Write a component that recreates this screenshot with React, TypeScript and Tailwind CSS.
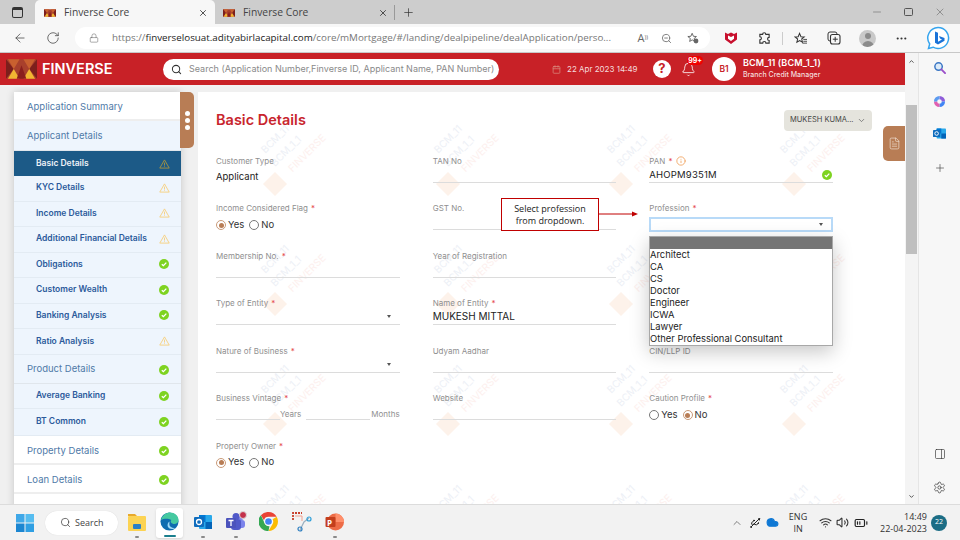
import React from "react";
import { ArrowLeft, RotateCw, Lock, X, Plus, Minus, Search, ZoomOut, ChevronDown, ChevronUp, Calendar, Bell, MoreHorizontal, Settings, PanelRight, FileText, Wifi, Volume2, BatteryMedium, Usb, Cloud, Info } from "lucide-react";

function Logo({ className }: { className: string }) {
  return (
    <svg viewBox="0 0 32 20" className={className}>
      <rect width="32" height="20" fill="#a8402c" />
      <polygon points="0,0 8,10 0,20" fill="#7c1f1c" />
      <polygon points="32,0 24,10 32,20" fill="#7c1f1c" />
      <polygon points="2,0 14,0 8,10" fill="#c9602f" />
      <polygon points="18,0 30,0 24,10" fill="#c9602f" />
      <polygon points="8,10 2,20 14,20" fill="#f2b632" />
      <polygon points="24,10 18,20 30,20" fill="#f2b632" />
      <polygon points="16,6 11,20 21,20" fill="#8a1f1d" />
    </svg>
  );
}

function Ok({ className = "" }: { className?: string }) {
  return (
    <svg viewBox="0 0 10 10" className={`w-[10px] h-[10px] shrink-0 ${className}`}>
      <circle cx="5" cy="5" r="5" fill="#7ed321" />
      <path d="M2.8 5.2 4.4 6.7 7.3 3.6" fill="none" stroke="#fff" strokeWidth="1.3" />
    </svg>
  );
}

function Warn({ dark = false }: { dark?: boolean }) {
  const c = dark ? "#a8943f" : "#f6cf7d";
  return (
    <svg viewBox="0 0 12 11" className="w-[11px] h-[10px] shrink-0">
      <path d="M6 1 11.2 10H.8Z" fill="none" stroke={c} strokeWidth="1" strokeLinejoin="round" />
      <path d="M6 4v3.2M6 8.1v.7" stroke={c} strokeWidth="1" />
    </svg>
  );
}

type NavItem = { t: string; s?: "ok" | "warn"; kind: "top" | "topw" | "sub"; active?: boolean; h: string };
const nav: NavItem[] = [
  { t: "Application Summary", kind: "topw", h: "h-[29px]" },
  { t: "Applicant Details", kind: "top", h: "h-[30px]" },
  { t: "Basic Details", kind: "sub", s: "warn", active: true, h: "h-[25px]" },
  { t: "KYC Details", kind: "sub", s: "warn", h: "h-[25.5px]" },
  { t: "Income Details", kind: "sub", s: "warn", h: "h-[25.5px]" },
  { t: "Additional Financial Details", kind: "sub", s: "warn", h: "h-[25.5px]" },
  { t: "Obligations", kind: "sub", s: "ok", h: "h-[25.5px]" },
  { t: "Customer Wealth", kind: "sub", s: "ok", h: "h-[25.5px]" },
  { t: "Banking Analysis", kind: "sub", s: "ok", h: "h-[25.5px]" },
  { t: "Ratio Analysis", kind: "sub", s: "warn", h: "h-[26px]" },
  { t: "Product Details", kind: "top", s: "ok", h: "h-[29px]" },
  { t: "Average Banking", kind: "sub", s: "ok", h: "h-[25px]" },
  { t: "BT Common", kind: "sub", s: "ok", h: "h-[27px]" },
  { t: "Property Details", kind: "topw", s: "ok", h: "h-[29px]" },
  { t: "Loan Details", kind: "topw", s: "ok", h: "h-[29px]" },
];

function NavRow({ n }: { n: NavItem }) {
  const base = n.active
    ? "bg-[#1c5a87] text-[#eef3f8] font-semibold text-[8.5px] pl-[22px]"
    : n.kind === "sub"
    ? "bg-[#eef5fd] text-[#2b5a9b] font-semibold text-[8.5px] pl-[22px] border-b border-[#e3ebf3] pb-[1px]"
    : n.kind === "top"
    ? "bg-[#eef5fd] text-[#4f7aa8] text-[9.5px] pl-[13px] border-b border-[#e0e6ec] pt-[1px]"
    : "bg-white text-[#4f7aa8] text-[9.5px] pl-[13px] border-b-2 border-[#eeeeee] pt-[3px]";
  return (
    <div className={`${n.h} flex items-center justify-between pr-[11px] ${base}`}>
      <span>{n.t}</span>
      {n.s === "ok" && <Ok className="mr-[1px]" />}
      {n.s === "warn" && <Warn dark={n.active} />}
    </div>
  );
}

function Label({ text, req }: { text: string; req?: boolean }) {
  return (
    <div className="h-3 flex items-center text-[8px] leading-3 text-[#8f8f8f]">
      {text}
      {req && <span className="text-[#e5484d] ml-[3px]">*</span>}
    </div>
  );
}

function Arrow() {
  return <span className="w-0 h-0 border-x-[2.500px] border-x-transparent border-t-[3px] border-t-[#555]" />;
}

function Field({ label, req, value, select, children }: { label: string; req?: boolean; value?: string; select?: boolean; children?: React.ReactNode }) {
  return (
    <div>
      <Label text={label} req={req} />
      {children ?? (
        <div className="h-[16px] border-b border-[#dcdcdc] flex items-center justify-between text-[10px] text-[#222] pr-[9px]">
          <span>{value}</span>
          {select && <Arrow />}
        </div>
      )}
    </div>
  );
}

function Radios({ yes }: { yes: boolean }) {
  const On = () => (
    <span className="w-[10px] h-[10px] rounded-full border border-[#c99a78] flex items-center justify-center">
      <span className="w-[5px] h-[5px] rounded-full bg-[#b87d55]" />
    </span>
  );
  const Off = () => <span className="w-[10px] h-[10px] rounded-full border border-[#777] bg-white" />;
  return (
    <div className="h-[16px] flex items-center text-[9.500px] text-[#333] mt-[3px]">
      {yes ? <On /> : <Off />}
      <span className="ml-[2px] mr-[5px]">Yes</span>
      {yes ? <Off /> : <On />}
      <span className="ml-[2px]">No</span>
    </div>
  );
}

function Tile() {
  return (
    <div className="relative w-[173px] h-[120px]">
      <span className="absolute left-[25px] top-[18px] -translate-x-1/2 -translate-y-1/2 -rotate-45 text-[10px] text-[#edf0f6] whitespace-nowrap">BCM_11</span>
      <span className="absolute left-[36px] top-[30px] -translate-x-1/2 -translate-y-1/2 -rotate-45 text-[10px] text-[#edf0f6] whitespace-nowrap">BCM_1_1</span>
      <span className="absolute left-[57px] top-[32px] -translate-x-1/2 -translate-y-1/2 -rotate-45 text-[10px] text-[#fdf0ee] whitespace-nowrap">FINVERSE</span>
      <span className="absolute left-[25px] top-[63px] -translate-x-1/2 -translate-y-1/2 -rotate-45 w-[17px] h-[17px] bg-[#fdf2ea]" />
    </div>
  );
}

const McAfee = () => (
  <svg viewBox="0 0 14 14" className="w-[14px] h-[14px]">
    <path d="M1 1.5 4 3l3-1.5L10 3l3-1.5v7L7 13 1 8.5Z" fill="#c8102e" />
    <path d="M4 4.5 7 6l3-1.5v3.2L7 10 4 7.700Z" fill="#fff" />
  </svg>
);

const Bing = () => (
  <svg viewBox="0 0 24 24" className="w-[24px] h-[24px]">
    <path d="M12 1.500a10.500 10.500 0 1 1-5 19.700L2.500 22.500l1.200-4.500A10.500 10.500 0 0 1 12 1.500Z" fill="#fff" stroke="#35a4ee" strokeWidth="1.500" />
    <path d="M9 5.500 12 6.700v9l4-2.300-2-.9-1-2.500 5.500 2v2.800L12 18.500 9 16.800Z" fill="#1a73d8" />
  </svg>
);

const Win = () => (
  <svg viewBox="0 0 18 18" className="w-[18px] h-[18px]">
    <rect x="0" y="0" width="8.500" height="8.500" fill="#3fa8e8" />
    <rect x="9.500" y="0" width="8.500" height="8.500" fill="#56bdf0" />
    <rect x="0" y="9.500" width="8.500" height="8.500" fill="#1c86d1" />
    <rect x="9.500" y="9.500" width="8.500" height="8.500" fill="#2f9fe3" />
  </svg>
);

const Explorer = () => (
  <svg viewBox="0 0 20 18" className="w-[20px] h-[18px]">
    <path d="M1 1h7l2 2H1Z" fill="#e8a92c" />
    <rect x="1" y="3" width="18" height="15" rx="1" fill="#fcd353" />
    <rect x="6" y="11" width="8" height="5" rx="1" fill="#2b7fc7" />
  </svg>
);

const Edge = () => (
  <svg viewBox="0 0 20 20" className="w-[19px] h-[19px]">
    <circle cx="10" cy="10" r="9.500" fill="#0f6cb0" />
    <path d="M1 8.500C2.500 3 7 .5 10.500 .5c5 0 9 3.500 9 8 0 3-3 4.500-5.500 4-2.500-.4-3.500-2.500-2-4-3-2-8-2-11 0Z" fill="#45c9a0" />
    <path d="M10 10c-2 1-3 5-.5 7 2 1.300 5 1 7-.5-3 .8-6-.5-6.500-2.500-.3-1.500 0-3 0-4Z" fill="#9fd8f5" />
  </svg>
);

const Outlook = ({ s = 18 }: { s?: number }) => (
  <svg viewBox="0 0 18 18" width={s} height={s}>
    <rect x="5" y="2" width="13" height="14" rx="1" fill="#28a8ea" />
    <rect x="5" y="2" width="6.500" height="7" fill="#0078d4" />
    <rect x="11.500" y="9" width="6.500" height="7" fill="#0364b8" />
    <rect x="0" y="4" width="10" height="10" rx="1" fill="#0f6cbd" />
    <circle cx="5" cy="9" r="2.500" fill="none" stroke="#fff" strokeWidth="1.300" />
  </svg>
);

const Teams = () => (
  <div className="relative w-[20px] h-[20px]">
    <svg viewBox="0 0 20 20" className="w-[20px] h-[20px]">
      <circle cx="15" cy="5" r="3" fill="#7b83eb" />
      <rect x="9" y="8" width="10" height="8" rx="3" fill="#7b83eb" />
      <circle cx="10" cy="4.500" r="3.500" fill="#5059c9" />
      <rect x="5" y="7" width="10" height="11" rx="3" fill="#5059c9" />
      <rect x="0" y="6" width="10" height="10" rx="1" fill="#4b53bc" />
      <path d="M2.500 8.500h5M5 8.500v5.500" stroke="#fff" strokeWidth="1.300" />
    </svg>
    <span className="absolute -top-[1px] -right-[1px] w-[8px] h-[8px] rounded-full bg-[#c4314b] border border-[#ddd]" />
  </div>
);

const Chrome = () => (
  <svg viewBox="0 0 20 20" className="w-[19px] h-[19px]">
    <path d="M10 0a10 10 0 0 1 8.660 5H10a5 5 0 0 0-4.800 3.600L2 3.300A10 10 0 0 1 10 0Z" fill="#ea4335" />
    <path d="M18.660 5A10 10 0 0 1 10 20l4.300-7.500A5 5 0 0 0 14.300 7.500Z" fill="#fbbc04" />
    <path d="M10 20A10 10 0 0 1 2 3.300l4.300 9.200A5 5 0 0 0 11 15Z" fill="#34a853" />
    <circle cx="10" cy="10" r="4.500" fill="#fff" />
    <circle cx="10" cy="10" r="3.500" fill="#4285f4" />
  </svg>
);

const Snip = () => (
  <svg viewBox="0 0 20 20" className="w-[20px] h-[20px]">
    <path d="M1 8V1h9" fill="none" stroke="#c8402c" strokeWidth="1.800" strokeDasharray="2 1" />
    <path d="M3 4h7v5" fill="none" stroke="#f0a090" strokeWidth="1" />
    <path d="M8 18 12 10l5-4" fill="none" stroke="#9ab0c0" strokeWidth="1.200" />
    <circle cx="8" cy="17" r="2" fill="none" stroke="#2f7fc0" strokeWidth="1.200" />
    <circle cx="17" cy="7" r="2" fill="none" stroke="#2f9fd8" strokeWidth="1.200" />
  </svg>
);

const Ppt = () => (
  <div className="relative w-[19px] h-[18px]">
    <svg viewBox="0 0 18 18" className="w-[19px] h-[18px]">
      <circle cx="10" cy="9" r="8.500" fill="#ed6c47" />
      <path d="M10 .5a8.500 8.500 0 0 1 8.500 8.500H10Z" fill="#ff8f6b" />
      <rect x="0" y="4" width="10" height="10" rx="1" fill="#c43e1c" />
    </svg>
    <span className="absolute left-[2px] top-[4px] text-[8px] leading-[11px] font-bold text-white">P</span>
  </div>
);

function TaskIcon({ children, dot = true, active = false }: { children: React.ReactNode; dot?: boolean; active?: boolean }) {
  return (
    <div className="relative w-[33px] h-[35px] flex items-center justify-center">
      {active && <span className="absolute left-[3px] right-[3px] top-[3px] bottom-[2px] bg-white rounded-[3px] shadow-sm" />}
      <span className="relative -mt-[2px]">{children}</span>
      {dot && !active && <span className="absolute bottom-[2px] w-[4px] h-[2px] rounded bg-[#8a8a8a]" />}
      {active && <span className="absolute bottom-[3px] w-[12px] h-[2px] rounded bg-[#1a7f8e]" />}
    </div>
  );
}

export default function App() {
  return (
    <div className="w-[960px] h-[540px] overflow-hidden flex flex-col bg-white font-['Inter',sans-serif]">
      {/* tab strip */}
      <div className="h-[24px] shrink-0 bg-[#cdcdcd] flex items-end font-['Open_Sans',sans-serif] text-[10.300px] text-[#444]">
        <div className="w-[35px] h-[24px] flex items-center justify-center">
          <span className="w-[11px] h-[11px] rounded-[2px] border-[1.500px] border-[#333] border-t-[3px]" />
        </div>
        <div className="w-[180px] h-[24px] bg-[#f7f7f7] rounded-t-[5px] flex items-center pl-[9px] pr-[7px] pt-[1px]">
          <Logo className="w-[12px] h-[8px]" />
          <span className="ml-[8px] flex-1">Finverse Core</span>
          <X size={10} color="#333" />
        </div>
        <div className="w-[175px] h-[24px] flex items-center pl-[8px] pr-[2px] pt-[1px]">
          <Logo className="w-[12px] h-[8px]" />
          <span className="ml-[8px] flex-1">Finverse Core</span>
          <X size={10} color="#333" />
        </div>
        <span className="w-px h-[15px] bg-[#999] mb-[4px] ml-[4px]" />
        <div className="h-[24px] flex items-center ml-[7px]">
          <Plus size={13} color="#333" strokeWidth={1.300} />
        </div>
        <div className="flex-1 h-[24px] flex items-center justify-end gap-[21px] pr-[14px]">
          <Minus size={12} color="#555" strokeWidth={1} />
          <span className="w-[9px] h-[8px] border border-[#555] rounded-[1.500px]" />
          <X size={12} color="#555" strokeWidth={1} />
        </div>
      </div>

      {/* toolbar */}
      <div className="h-[29px] shrink-0 bg-[#f7f7f7] border-b border-[#c8c8c8] flex items-center">
        <div className="w-[75px] flex items-center pl-[13px] gap-[19px]">
          <ArrowLeft size={14} color="#444" strokeWidth={1.300} />
          <RotateCw size={14} color="#444" strokeWidth={1.300} />
        </div>
        <div className="w-[635px] h-[22px] rounded-full bg-white flex items-center pl-[14px] pr-[11px]">
          <Lock size={10} color="#666" strokeWidth={1.300} />
          <span className="ml-[13px] flex-1 text-[9.800px] whitespace-nowrap overflow-hidden font-['Open_Sans',sans-serif] text-[#777]">
            https://<span className="text-[#222]">finverselosuat.adityabirlacapital.com</span>/core/mMortgage/#/landing/dealpipeline/dealApplication/perso...
          </span>
          <span className="ml-[10px] text-[11px] text-[#666] font-['Open_Sans',sans-serif]">A<sup className="text-[6px]">))</sup></span>
          <ZoomOut size={11} color="#777" className="ml-[13px]" />
          <svg viewBox="0 0 14 14" className="w-[12px] h-[12px] ml-[15px]">
            <path d="M6 1.500 7.500 5l3.500.300-2.700 2.300.8 3.400-3-1.800-3 1.800.8-3.400L1 5.300 4.500 5Z" fill="none" stroke="#555" strokeWidth="1" />
            <circle cx="10.500" cy="10.500" r="2.800" fill="#666" />
          </svg>
        </div>
        <div className="flex-1 flex items-center pl-[14px] relative h-full">
          <McAfee />
          <svg viewBox="0 0 14 14" className="w-[13px] h-[13px] ml-[20px]">
            <path d="M5 2.500a1.700 1.700 0 0 1 3.400 0H12v3.300a1.700 1.700 0 0 0 0 3.400V12H8.500a1.700 1.700 0 0 0-3.400 0H2V8.500a1.700 1.700 0 0 0 0-3.400V2.500Z" fill="none" stroke="#333" strokeWidth="1.200" />
          </svg>
          <span className="w-px h-[13px] bg-[#ccc] ml-[11px]" />
          <svg viewBox="0 0 14 14" className="w-[13px] h-[13px] ml-[11px]">
            <path d="M6 1.500 7.500 5l3.500.300-2.700 2.300.8 3.400-3-1.800-3 1.800.8-3.400L1 5.300 4.500 5Z" fill="none" stroke="#333" strokeWidth="1.100" />
            <path d="M10 8h4M10 10h4M9 12h5" stroke="#333" strokeWidth=".9" />
          </svg>
          <svg viewBox="0 0 14 14" className="w-[14px] h-[14px] ml-[20px]">
            <rect x="1" y="1" width="9" height="9" rx="2" fill="none" stroke="#333" strokeWidth="1" />
            <rect x="3.500" y="3.500" width="9.500" height="9.500" rx="2" fill="#f7f7f7" stroke="#333" strokeWidth="1.100" />
            <path d="M8.200 5.800v5M5.800 8.200h5" stroke="#333" strokeWidth="1" />
          </svg>
          <span className="w-[17px] h-[17px] rounded-full bg-[#c9c9c9] ml-[18px] flex items-end justify-center overflow-hidden relative">
            <span className="absolute top-[3px] w-[6px] h-[6px] rounded-full bg-[#8b8b8b]" />
            <span className="w-[12px] h-[6px] rounded-t-full bg-[#8b8b8b]" />
          </span>
          <MoreHorizontal size={13} color="#333" className="ml-[19px]" />
          <div className="absolute right-[10px] top-[2px]"><Bing /></div>
        </div>
      </div>

      {/* body */}
      <div className="flex-1 min-h-0 flex">
        <div className="w-[905px] flex flex-col min-h-0">
          {/* app header */}
          <div className="h-[34px] shrink-0 bg-[#c82127] border-b-2 border-[#f2f2f2] flex items-center text-white">
            <Logo className="w-[31px] h-[20px] ml-[6px]" />
            <span className="ml-[5px] w-[121px] font-semibold text-[14.500px]">FINVERSE</span>
            <div className="w-[336px] h-[21px] rounded-full bg-white flex items-center pl-[8px] text-[#8a8a8a] text-[9px] whitespace-nowrap overflow-hidden">
              <Search size={11} color="#333" strokeWidth={2.200} className="shrink-0" />
              <span className="ml-[7px]">Search (Application Number,Finverse ID, Applicant Name, PAN Number)</span>
            </div>
            <Calendar size={9} color="#d98a7d" className="ml-[53px]" />
            <span className="ml-[6px] w-[86px] text-[8px] text-[#f5dcdc]">22 Apr 2023 14:49</span>
            <span className="w-[18px] h-[18px] rounded-full bg-white text-[#c82127] font-bold text-[13px] flex items-center justify-center">?</span>
            <div className="relative ml-[10px] mr-[12px] w-[15px] flex justify-center">
              <Bell size={15} strokeWidth={1.300} color="#fff" />
              <span className="absolute -top-[6px] -right-[7px] h-[9px] px-[1px] rounded-full bg-[#f00000] text-[7px] leading-[9px] font-bold">99+</span>
            </div>
            <span className="ml-[4px] w-[24px] h-[24px] rounded-full bg-white text-[#c82127] text-[8.500px] font-semibold flex items-center justify-center">B1</span>
            <div className="ml-[7px] flex flex-col leading-[12px]">
              <span className="text-[9px] font-semibold tracking-[0.100px]">BCM_11 (BCM_1_1)</span>
              <span className="text-[7px] font-medium text-[#f5dcdc]">Branch Credit Manager</span>
            </div>
          </div>

          {/* content */}
          <div className="flex-1 min-h-0 bg-[#f0f0f0] flex pt-[5px] pl-[14px] overflow-hidden">
            <div className="relative w-[167px] shrink-0 bg-white shadow-[0_0_8px_rgba(0,0,0,.18)] self-start h-[420px]">
              {nav.map((n) => <NavRow key={n.t} n={n} />)}
              <div className="absolute -right-[13px] top-0 w-[14px] h-[56px] bg-[#b87d55] rounded-r-[5px] flex flex-col items-center justify-center gap-[2px]">
                <span className="w-[5px] h-[5px] rounded-full bg-white" />
                <span className="w-[5px] h-[5px] rounded-full bg-white" />
                <span className="w-[5px] h-[5px] rounded-full bg-white" />
              </div>
            </div>
            <div className="relative ml-[17px] flex-1 bg-white pl-[18px] pr-[72px]">
              <div className="absolute inset-0 grid grid-cols-[repeat(4,173px)] auto-rows-[120px] pl-[52px] pt-[29px] overflow-hidden">
                {Array.from({ length: 16 }).map((_, i) => <Tile key={i} />)}
              </div>
              <div className="relative">
                <div className="h-[62.500px] flex items-start justify-between">
                  <h1 className="mt-[19px] text-[14.500px] font-semibold leading-[18px] text-[#c8252d]">Basic Details</h1>
                  <div className="mt-[17.500px] -mr-[39px] w-[88px] h-[21px] rounded-[4px] bg-[#e5e4dd] flex items-center justify-between px-[6px] text-[7.500px] text-[#444]">
                    <span className="whitespace-nowrap">MUKESH KUMA...</span>
                    <ChevronDown size={9} color="#666" />
                  </div>
                </div>
                <div className="grid grid-cols-3 gap-x-[33px] auto-rows-[47.500px]">
                  <Field label="Customer Type">
                    <div className="h-[16px] mt-[3px] flex items-center text-[9.500px] text-[#222]">Applicant</div>
                  </Field>
                  <Field label="TAN No" />
                  <div>
                    <div className="h-3 flex items-center text-[8px] text-[#8f8f8f]">
                      PAN<span className="text-[#e5484d] ml-[3px]">*</span>
                      <Info size={10} color="#f0a05a" className="ml-[4px]" />
                    </div>
                    <div className="h-[16px] border-b border-[#dcdcdc] flex items-center justify-between text-[9.500px] tracking-[0.200px] text-[#222] pr-[1px] pt-[2px]">
                      <span>AHOPM9351M</span>
                      <Ok />
                    </div>
                  </div>

                  <Field label="Income Considered Flag" req><Radios yes /></Field>
                  <Field label="GST No." />
                  <div>
                    <Label text="Profession" req />
                    <div className="mt-[3px] h-[15px] border-2 border-[#b8daf8] flex items-center justify-end pr-[8px]"><Arrow /></div>
                  </div>

                  <Field label="Membership No." req />
                  <Field label="Year of Registration" />
                  <Field label="" />

                  <Field label="Type of Entity" req value="" select />
                  <Field label="Name of Entity" req value="MUKESH MITTAL" />
                  <Field label="" />

                  <Field label="Nature of Business" req value="" select />
                  <Field label="Udyam Aadhar" />
                  <Field label="CIN/LLP ID" />

                  <Field label="Business Vintage" req>
                    <div className="h-[16px] flex text-[8px] text-[#8f8f8f]">
                      <div className="w-[65px] border-b border-[#dcdcdc]" />
                      <span className="w-[27px] self-end">Years</span>
                      <div className="w-[65px] border-b border-[#dcdcdc]" />
                      <span className="self-end ml-[1px]">Months</span>
                    </div>
                  </Field>
                  <Field label="Website" />
                  <Field label="Caution Profile" req><Radios yes={false} /></Field>

                  <Field label="Property Owner" req><Radios yes /></Field>
                </div>
              </div>

              {/* callout */}
              <div className="absolute left-[303px] top-[106px] w-[98px] h-[33px] border border-[#c00000] bg-white flex items-center justify-center text-center font-['Open_Sans',sans-serif] text-[9px] leading-[12px] text-[#222]">
                Select profession<br />from dropdown.
              </div>
              <svg viewBox="0 0 40 8" className="absolute left-[401px] top-[118px] w-[40px] h-[8px]">
                <path d="M0 4h34" stroke="#c00000" strokeWidth="1" />
                <path d="M33 1.500 39 4l-6 2.500Z" fill="#c00000" />
              </svg>

              {/* dropdown */}
              <div className="absolute left-[451px] top-[144px] w-[184px] h-[110px] bg-white border border-[#a8a8a8] shadow-[0_6px_18px_rgba(0,0,0,.22)] text-[9.400px] leading-[12px] text-[#222]">
                <div className="h-[12px] bg-[#757575]" />
                {["Architect", "CA", "CS", "Doctor", "Engineer", "ICWA", "Lawyer", "Other Professional Consultant"].map((o) => (
                  <div key={o} className="h-[12px] whitespace-nowrap">{o}</div>
                ))}
              </div>

              {/* doc tab */}
              <div className="absolute right-0 top-[34px] w-[22px] h-[35px] rounded-l-[5px] bg-[#b87d55] flex items-center justify-center">
                <FileText size={13} color="#f3e6db" strokeWidth={1.200} />
              </div>
            </div>
          </div>
        </div>

        {/* page scrollbar */}
        <div className="w-[13px] shrink-0 bg-[#f4f4f4] flex flex-col items-center relative">
          <ChevronUp size={7} color="#444" strokeWidth={3} className="mt-[5px]" />
          <div className="mt-[40px] w-[11px] h-[149px] bg-[#bfbfbf]" />
          <div className="flex-1" />
          <ChevronDown size={7} color="#444" strokeWidth={3} className="mb-[4px]" />
        </div>

        {/* edge sidebar */}
        <div className="flex-1 bg-[#f7f7f7] border-l border-[#e5e5e5] flex flex-col items-center pt-[8px]">
          <svg viewBox="0 0 14 14" className="w-[13px] h-[13px]">
            <circle cx="6" cy="6" r="4" fill="#dcebf8" stroke="#3a76c4" strokeWidth="1.600" />
            <path d="M9 9l4 4" stroke="#9b4fc9" strokeWidth="2" strokeLinecap="round" />
          </svg>
          <svg viewBox="0 0 14 14" className="w-[13px] h-[13px] mt-[21px]">
            <path d="M7 1a6 6 0 0 1 6 6h-3.500A2.500 2.500 0 0 0 7 4.500Z" fill="#8e5cd9" />
            <path d="M13 7a6 6 0 0 1-6 6V9.500A2.500 2.500 0 0 0 9.500 7Z" fill="#4285f4" />
            <path d="M7 13A6 6 0 0 1 1 7h3.500A2.500 2.500 0 0 0 7 9.500Z" fill="#e05fb0" />
            <path d="M1 7a6 6 0 0 1 6-6v3.500A2.500 2.500 0 0 0 4.500 7Z" fill="#5b9bf0" />
          </svg>
          <div className="mt-[19px]"><Outlook s={13} /></div>
          <Plus size={12} color="#444" strokeWidth={1.300} className="mt-[22px]" />
          <div className="flex-1" />
          <PanelRight size={12} color="#333" strokeWidth={1.300} className="mb-[21px]" />
          <Settings size={13} color="#333" strokeWidth={1.300} className="mb-[10px]" />
        </div>
      </div>

      {/* taskbar */}
      <div className="h-[36px] shrink-0 bg-[#f2f2f2] border-t border-[#dcdcdc] flex items-center font-['Open_Sans',sans-serif]">
        <div className="ml-[16px]"><Win /></div>
        <div className="ml-[11px] w-[73px] h-[24px] rounded-full bg-white flex items-center pl-[15px] text-[9px] text-[#444] shadow-[0_0_1px_rgba(0,0,0,.15)]">
          <Search size={11} color="#333" strokeWidth={1.500} />
          <span className="ml-[4px]">Search</span>
        </div>
        <div className="ml-[2px] flex">
          <TaskIcon><Explorer /></TaskIcon>
          <TaskIcon active><Edge /></TaskIcon>
          <TaskIcon><Outlook /></TaskIcon>
          <TaskIcon><Teams /></TaskIcon>
          <TaskIcon dot={false}><Chrome /></TaskIcon>
          <TaskIcon dot={false}><Snip /></TaskIcon>
          <TaskIcon><Ppt /></TaskIcon>
        </div>
        <div className="flex-1" />
        <div className="flex items-center text-[#333]">
          <ChevronUp size={12} color="#333" strokeWidth={1.200} />
          <Usb size={12} color="#222" className="ml-[6px]" />
          <Cloud size={13} color="#0f78d4" fill="#0f78d4" className="ml-[5px]" />
          <div className="ml-[7px] w-[24px] text-center text-[9px] leading-[12px]">ENG<br />IN</div>
          <Wifi size={13} color="#333" className="ml-[9px]" />
          <Volume2 size={13} color="#333" className="ml-[4px]" />
          <BatteryMedium size={14} color="#222" className="ml-[5px]" />
          <div className="ml-[12px] text-right text-[9px] leading-[12px]">14:49<br />22-04-2023</div>
          <span className="ml-[4px] mr-[13px] w-[16px] h-[16px] rounded-full bg-[#1c6d85] text-white text-[7px] flex items-center justify-center">22</span>
        </div>
      </div>
    </div>
  );
}
